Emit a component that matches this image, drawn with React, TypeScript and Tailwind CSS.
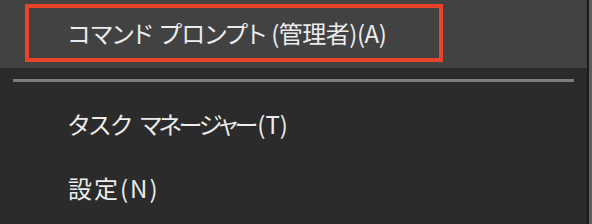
export default function App() {
    const font = { fontFamily: '"Noto Sans CJK JP", "Noto Sans", sans-serif' };

    return (
        <div className="flex h-[224px] w-[592px] overflow-hidden bg-[#2b2b2b]" style={font}>
            <div className="flex flex-1 flex-col">
                {/* hovered item with red annotation frame */}
                <div className="h-[68px] bg-[#424242] pt-[4px] pl-[25px]">
                    <div className="flex h-[58px] w-[418px] items-center border-4 border-[#e8442a] pl-[39px]">
                        <span className="flex text-[24px] leading-none whitespace-nowrap text-[#ececec] [font-feature-settings:'palt']">
                            <span>コマンド</span>
                            <span className="ml-[7px]">プロンプト</span>
                            <span className="ml-[5px] tracking-[-0.5px]">(管理者)(A)</span>
                        </span>
                    </div>
                </div>

                {/* separator */}
                <div className="flex h-[24px] items-center px-[13px]">
                    <div className="h-[3px] w-full bg-[#7c7c7c]" />
                </div>

                <div className="flex h-[64px] items-center pl-[68px]">
                    <span className="flex text-[24px] leading-none whitespace-nowrap text-[#ececec] [font-feature-settings:'palt']">
                        <span>タスク</span>
                        <span className="ml-[8px] tracking-[-3px]">マネージャー</span>
                        <span className="ml-[2px]">(T)</span>
                    </span>
                </div>
                <div className="flex h-[64px] items-center pl-[68px]">
                    <span className="text-[24px] leading-none tracking-[2px] text-[#ececec] [font-feature-settings:'palt']">
                        設定(N)
                    </span>
                </div>
            </div>

            {/* window edge */}
            <div className="w-[2px] bg-[#1b1b1b]" />
            <div className="w-[3px] bg-[#5e5e5e]" />
        </div>
    );
}
